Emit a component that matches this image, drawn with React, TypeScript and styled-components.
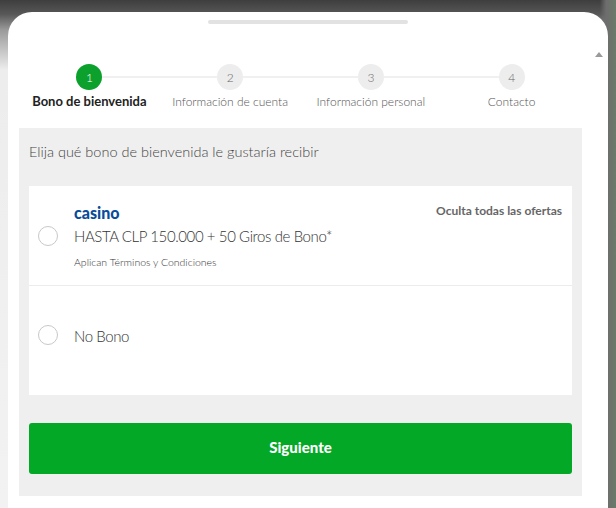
import styled, { createGlobalStyle } from 'styled-components';

const GlobalStyle = createGlobalStyle`
  html, body {
    margin: 0;
    height: 100%;
  }
  body {
    font-family: Lato, "Open Sans", Arial, sans-serif;
    background:
      linear-gradient(to right, transparent 600px, #6d6d6d 606px, #6a7a6a 616px),
      linear-gradient(to bottom, #3e3e3e 0, #575757 14px, #9a9a9a 30px, #ededed 70px, #f2f2f2 100%);
    overflow: hidden;
  }
  #root {
    height: 100%;
  }
`;

const steps = ['Bono de bienvenida', 'Información de cuenta', 'Información personal', 'Contacto'];

function App() {
  return (
    <>
      <GlobalStyle />
      <Page>
        <Sheet>
          <Handle />
          <Body>
            <Content>
              <Stepper>
                {steps.map((label, i) => (
                  <Step key={label} first={i === 0} last={i === steps.length - 1}>
                    <StepDot active={i === 0}>{i + 1}</StepDot>
                    <StepLabel active={i === 0}>{label}</StepLabel>
                  </Step>
                ))}
              </Stepper>
              <Panel>
                <Question>Elija qué bono de bienvenida le gustaría recibir</Question>
                <Card>
                  <Option>
                    <Radio />
                    <OptionText>
                      <Brand>casino</Brand>
                      <Offer>HASTA CLP 150.000 + 50 Giros de Bono*</Offer>
                      <Terms>Aplican Términos y Condiciones</Terms>
                    </OptionText>
                    <HideLink>Oculta todas las ofertas</HideLink>
                  </Option>
                  <Option tall>
                    <Radio />
                    <OptionText>
                      <Offer>No Bono</Offer>
                    </OptionText>
                  </Option>
                </Card>
                <NextButton>Siguiente</NextButton>
              </Panel>
            </Content>
            <ScrollBar>
              <ScrollArrow />
            </ScrollBar>
          </Body>
        </Sheet>
      </Page>
    </>
  );
}

const Page = styled.div`
  height: 100%;
  padding: 12px 8px 0;
  box-sizing: border-box;
`;

const Sheet = styled.div`
  height: 100%;
  background: #fff;
  border-radius: 24px 24px 0 0;
  display: flex;
  flex-direction: column;
`;

const Handle = styled.div`
  width: 200px;
  height: 4px;
  margin: 8px auto 0;
  border-radius: 2px;
  background: #e2e2e2;
`;

const Body = styled.div`
  display: flex;
  flex: 1;
`;

const Content = styled.div`
  flex: 1;
  padding: 0 0 0 11px;
`;

const ScrollBar = styled.div`
  width: 26px;
  display: flex;
  justify-content: flex-end;
  padding-top: 28px;
  padding-right: 5px;
  box-sizing: border-box;
`;

const ScrollArrow = styled.div`
  width: 0;
  height: 0;
  border-left: 4px solid transparent;
  border-right: 4px solid transparent;
  border-bottom: 5px solid #9a9a9a;
`;

const Stepper = styled.div`
  display: grid;
  grid-template-columns: repeat(4, 1fr);
  margin-top: 40px;
`;

const Step = styled.div<{ first: boolean; last: boolean }>`
  position: relative;
  display: flex;
  flex-direction: column;
  align-items: center;

  &::before {
    content: '';
    position: absolute;
    top: 12px;
    left: ${({ first }) => (first ? '50%' : '0')};
    right: ${({ last }) => (last ? '50%' : '0')};
    height: 2px;
    background: #f0f0f0;
  }
`;

const StepDot = styled.div<{ active: boolean }>`
  position: relative;
  width: 26px;
  height: 26px;
  border-radius: 50%;
  display: flex;
  align-items: center;
  justify-content: center;
  font-size: 12px;
  font-weight: 300;
  background: ${({ active }) => (active ? '#0ca02c' : '#ededed')};
  color: ${({ active }) => (active ? '#fff' : '#666')};
`;

const StepLabel = styled.div<{ active: boolean }>`
  margin-top: 4px;
  font-size: ${({ active }) => (active ? '13px' : '12px')};
  line-height: 15px;
  font-weight: ${({ active }) => (active ? 700 : 300)};
  color: ${({ active }) => (active ? '#222' : '#555')};
  white-space: nowrap;
`;

const Panel = styled.div`
  margin-top: 19px;
  background: #efefef;
  padding: 15px 10px 22px;
`;

const Question = styled.div`
  font-size: 14.5px;
  font-weight: 300;
  color: #444;
  line-height: 18px;
`;

const Card = styled.div`
  margin-top: 25px;
  background: #fff;
`;

const Option = styled.div<{ tall?: boolean }>`
  position: relative;
  display: flex;
  align-items: center;
  gap: 16px;
  padding: 0 0 ${({ tall }) => (tall ? '12px' : '0')} 9px;
  height: ${({ tall }) => (tall ? '110px' : '99px')};
  box-sizing: border-box;

  & + & {
    border-top: 1px solid #ececec;
  }
`;

const Radio = styled.div`
  width: 20px;
  height: 20px;
  border-radius: 50%;
  border: 1px solid #c8c8c8;
  box-sizing: border-box;
  background: #fff;
`;

const OptionText = styled.div`
  display: flex;
  flex-direction: column;
`;

const Brand = styled.div`
  font-size: 16px;
  font-weight: 900;
  color: #0a4c9a;
  line-height: 18px;
`;

const Offer = styled.div`
  font-size: 15px;
  letter-spacing: -0.4px;
  font-weight: 300;
  color: #333;
  line-height: 22px;
  margin-top: 3px;
`;

const Terms = styled.div`
  font-size: 10.5px;
  font-weight: 300;
  color: #333;
  margin-top: 9px;
`;

const HideLink = styled.div`
  position: absolute;
  top: 17px;
  right: 10px;
  font-size: 12px;
  font-weight: 700;
  color: #666;
`;

const NextButton = styled.button`
  display: block;
  width: 100%;
  height: 51px;
  margin-top: 28px;
  border: none;
  border-radius: 3px;
  background: #02a826;
  color: #fff;
  font-family: Lato, "Open Sans", Arial, sans-serif;
  font-size: 15px;
  font-weight: 900;
  line-height: 1;
  padding-bottom: 3px;
  cursor: pointer;
`;

export default App;
